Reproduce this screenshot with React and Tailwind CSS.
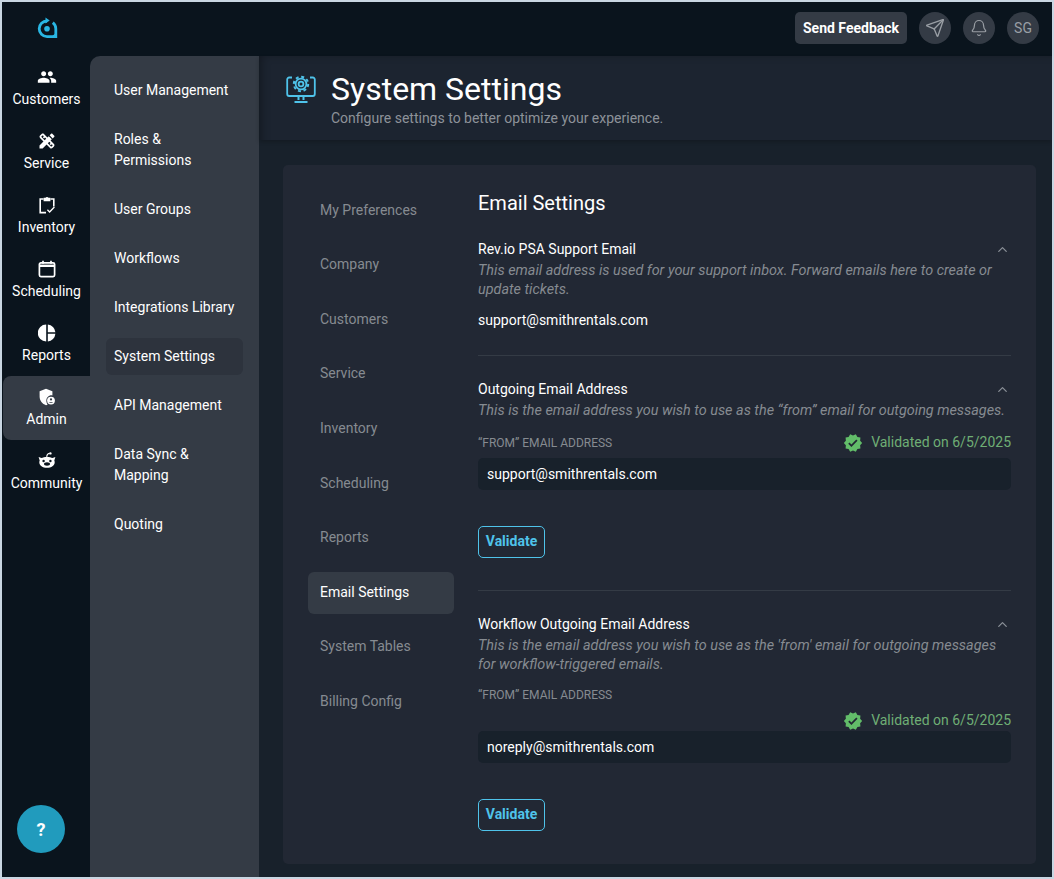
import React from 'react'
import { MdPeople, MdDesignServices, MdVerified } from 'react-icons/md'
import { ChevronUp, Bell, Send } from 'lucide-react'

function LogoIcon() {
    return (
        <svg width="22" height="22" viewBox="0 0 22 22" fill="none">
            <path d="M11 4a7.800 7.800 0 1 0 0 15.600h8.800v-7.800a7.800 7.800 0 0 0-3-6.100" stroke="#29b6e3" strokeWidth="2.800" />
            <path d="M9.500 .6l4.200 3-4.200 2.800z" fill="#29b6e3" />
            <path d="M21 21h-7l7-6z" fill="#29b6e3" />
            <circle cx="11" cy="11.800" r="2.800" fill="#29b6e3" />
        </svg>
    )
}

function ClipboardIcon() {
    return (
        <svg width="18" height="18" viewBox="0 0 18 18" fill="none" stroke="white" strokeWidth="1.600">
            <path d="M8 16.600H2.200V3h3.400M12.400 3h3.400v7.400" />
            <path d="M5.600 1.800h1.900a1.700 1.700 0 0 1 3 0h1.900v3.400H5.600z" fill="white" stroke="none" />
            <path d="M9.400 13.800l2.200 2.200 4.800-5" strokeWidth="1.300" />
        </svg>
    )
}

function CalendarIcon() {
    return (
        <svg width="18" height="18" viewBox="0 0 18 18" fill="none" stroke="white" strokeWidth="1.700">
            <rect x="1.400" y="2.800" width="15.200" height="13.800" rx="1.500" />
            <path d="M1.400 5.800h15.200" strokeWidth="2.400" />
            <path d="M5 .8v3M13 .8v3" />
        </svg>
    )
}

function PieIcon() {
    return (
        <svg width="18" height="18" viewBox="0 0 18 18" fill="white">
            <path d="M8.200 .6v16.800a8.400 8.400 0 0 1 0-16.800z" />
            <path d="M9.800 .6a8.400 8.400 0 0 1 7.600 7.600H9.800z" />
            <path d="M9.800 9.800h7.600a8.400 8.400 0 0 1-7.600 7.600z" />
        </svg>
    )
}

function AdminIcon() {
    return (
        <svg width="18" height="18" viewBox="0 0 18 18">
            <path d="M8 .8l6.400 2.400v4.200c-3.200-.6-6.400 2-6 6 .1 1.200.6 2.200 1.200 3.100-.5.3-1 .5-1.600.7-3.600-1-6.400-4.600-6.400-8.600V3.200z" fill="white" />
            <circle cx="13" cy="12.600" r="3.900" fill="white" />
            <circle cx="13" cy="11.400" r="1.100" fill="#343b45" />
            <path d="M10.800 14.800c.4-1.200 4-1.200 4.400 0z" fill="#343b45" />
        </svg>
    )
}

function CommunityIcon() {
    return (
        <svg width="18" height="18" viewBox="0 0 18 18">
            <path d="M9 5c-2.200 0-4.200.4-5.500 1.100L.6 5l1.100 3.400C1.400 9 1.300 9.600 1.300 10.200c0 3.400 3.400 5.600 7.700 5.600s7.700-2.200 7.700-5.600c0-.6-.1-1.200-.4-1.800L17.400 5l-2.900 1.100C13.200 5.400 11.200 5 9 5z" fill="white" />
            <path d="M8.800 5.200c-.1-1.800.4-3.400 2.700-3.800" stroke="white" strokeWidth="1.100" fill="none" />
            <circle cx="12.400" cy="1.400" r="1.200" fill="white" />
            <circle cx="5.600" cy="9" r="1.200" fill="#0a141d" />
            <circle cx="12.400" cy="9" r="1.200" fill="#0a141d" />
            <ellipse cx="9" cy="12" rx="3" ry="1.700" fill="#0a141d" />
        </svg>
    )
}

function SettingsMonitorIcon() {
    return (
        <svg width="32" height="32" viewBox="0 0 32 32" fill="none" stroke="#4fc3ea" strokeWidth="1.800">
            <path d="M7 6.500H4.200a2 2 0 0 0-2 2V23a2 2 0 0 0 2 2h23.600a2 2 0 0 0 2-2V8.500a2 2 0 0 0-2-2H25" />
            <path d="M13.500 25v4M18.500 25v4" strokeWidth="2" />
            <path d="M9.500 31h13" strokeWidth="2" />
            <circle cx="16" cy="13" r="2.400" strokeWidth="1.800" />
            <circle cx="16" cy="13" r="5.400" strokeWidth="1.800" />
            <circle cx="16" cy="13" r="7.200" strokeWidth="2" strokeDasharray="3 2.650" />
        </svg>
    )
}

const mainNav = [
    { label: 'Customers', icon: <MdPeople size={20} color="white" /> },
    { label: 'Service', icon: <MdDesignServices size={20} color="white" /> },
    { label: 'Inventory', icon: <ClipboardIcon /> },
    { label: 'Scheduling', icon: <CalendarIcon /> },
    { label: 'Reports', icon: <PieIcon /> },
    { label: 'Admin', icon: <AdminIcon />, active: true },
    { label: 'Community', icon: <CommunityIcon /> },
]

const adminNav = [
    'User Management',
    'Roles & Permissions',
    'User Groups',
    'Workflows',
    'Integrations Library',
    'System Settings',
    'API Management',
    'Data Sync & Mapping',
    'Quoting',
]

const settingsNav = [
    'My Preferences',
    'Company',
    'Customers',
    'Service',
    'Inventory',
    'Scheduling',
    'Reports',
    'Email Settings',
    'System Tables',
    'Billing Config',
]

function SectionTitle({ children }) {
    return (
        <div className="flex h-[21px] items-center justify-between">
            <span className="text-sm leading-[21px] text-white">{children}</span>
            <ChevronUp size={15} color="#8a9097" className="mr-[1px]" />
        </div>
    )
}

function Validated() {
    return (
        <div className="flex items-center gap-[8px] text-sm leading-[21px] text-[#6fae75]">
            <MdVerified size={20} color="#62bd69" />
            <span>Validated on 6/5/2025</span>
        </div>
    )
}

function ValidateButton() {
    return (
        <button className="flex h-[32px] w-[67px] items-center justify-center rounded-[5px] border border-[#4fc3ea] pb-[2px] text-sm font-bold text-[#4fc3ea]">
            Validate
        </button>
    )
}

function App() {
    return (
        <div className="h-[879px] w-[1054px] overflow-hidden border-2 border-[#c9d6e2] bg-[#0a141d] font-['Roboto',sans-serif]">
            {/* Top bar */}
            <div className="flex h-[54px] items-center justify-between pb-[2px] pl-[34px] pr-[13px]">
                <LogoIcon />
                <div className="flex items-center gap-[12px]">
                    <button className="flex h-[32px] w-[112px] items-center justify-center rounded-[5px] bg-[#343b45] text-sm font-bold text-white">
                        Send Feedback
                    </button>
                    <div className="flex size-[32px] items-center justify-center rounded-full bg-[#343b45]">
                        <Send size={20} color="#9a9fa5" strokeWidth={1.6} />
                    </div>
                    <div className="flex size-[32px] items-center justify-center rounded-full bg-[#343b45]">
                        <Bell size={18} color="#9a9fa5" strokeWidth={1.6} />
                    </div>
                    <div className="flex size-[32px] items-center justify-center rounded-full bg-[#343b45] text-sm text-[#9a9fa5]">
                        SG
                    </div>
                </div>
            </div>

            <div className="flex h-[821px]">
                {/* Main nav */}
                <div className="relative flex w-[88px] shrink-0 flex-col">
                    {mainNav.map((item) => (
                        <div key={item.label} className={`ml-[1px] flex h-[64px] flex-col items-center rounded-l-[8px] pt-[11px] ${item.active ? 'bg-[#343b45]' : ''}`}>
                            <div className="flex h-[20px] items-center justify-center">{item.icon}</div>
                            <span className="mt-[2px] text-sm leading-[21px] text-white">{item.label}</span>
                        </div>
                    ))}
                    <div className="absolute bottom-[24px] left-[15px] flex size-[48px] items-center justify-center rounded-full bg-[#219bbd] text-[18px] font-bold text-white">
                        ?
                    </div>
                </div>

                {/* Admin nav */}
                <div className="flex w-[169px] shrink-0 flex-col gap-[12px] rounded-tl-[10px] bg-[#343b45] px-[16px] pt-[16px]">
                    {adminNav.map((item) => (
                        <div key={item} className={`rounded-[6px] p-[8px] text-sm leading-[21px] text-white ${item === 'System Settings' ? 'bg-[#2d333d]' : ''}`}>
                            {item}
                        </div>
                    ))}
                </div>

                {/* Content */}
                <div className="flex min-w-0 flex-1 flex-col bg-[#18212b]">
                    <div className="flex h-[84px] items-start bg-[#1c2430] pl-[26px] pt-[15px] shadow-[inset_10px_6px_10px_-8px_rgba(0,0,0,0.35),0_2px_4px_rgba(0,0,0,0.2)]">
                        <SettingsMonitorIcon />
                        <div className="ml-[14px]">
                            <h1 className="text-[32px] leading-[36px] text-white">System Settings</h1>
                            <p className="mt-[1px] text-sm leading-[20px] text-[#8d9299]">Configure settings to better optimize your experience.</p>
                        </div>
                    </div>

                    <div className="ml-[24px] mt-[25px] flex h-[699px] w-[753px] rounded-[5px] bg-[#222834] pl-[25px] pt-[24px]">
                        <div className="mt-[0.8px] flex w-[146px] flex-col gap-[12.55px]">
                            {settingsNav.map((item) => (
                                <div key={item} className={`flex h-[42px] shrink-0 items-center rounded-[6px] px-[12px] pb-[2px] text-sm ${item === 'Email Settings' ? 'bg-[#343b45] text-white' : 'text-[#868b91]'}`}>
                                    {item}
                                </div>
                            ))}
                        </div>

                        <div className="ml-[24px] w-[533px]">
                            <h2 className="text-[20px] leading-[28px] text-white">Email Settings</h2>

                            <div className="mt-[22px] h-[117px] border-b border-[#343b45]">
                                <SectionTitle>Rev.io PSA Support Email</SectionTitle>
                                <p className="mt-[1px] text-[14.4px] italic leading-[19px] text-[#868b91]">
                                    This email address is used for your support inbox. Forward emails here to create or update tickets.
                                </p>
                                <p className="mt-[11px] text-sm leading-[21px] text-white">support@smithrentals.com</p>
                            </div>

                            <div className="mt-[23px] h-[212px] border-b border-[#343b45]">
                                <SectionTitle>Outgoing Email Address</SectionTitle>
                                <p className="text-[14.4px] italic leading-[21px] text-[#868b91]">
                                    This is the email address you wish to use as the “from” email for outgoing messages.
                                </p>
                                <div className="mt-[11px] flex h-[21px] items-center justify-between">
                                    <span className="text-xs text-[#868b91]">“FROM” EMAIL ADDRESS</span>
                                    <Validated />
                                </div>
                                <div className="mt-[5px] flex h-[32px] items-center rounded-[5px] bg-[#18212b] px-[9px] text-sm text-white">
                                    support@smithrentals.com
                                </div>
                                <div className="mt-[36px]">
                                    <ValidateButton />
                                </div>
                            </div>

                            <div className="mt-[23px]">
                                <SectionTitle>Workflow Outgoing Email Address</SectionTitle>
                                <p className="mt-[1px] text-[14.4px] italic leading-[19px] text-[#868b91]">
                                    This is the email address you wish to use as the 'from' email for outgoing messages for workflow-triggered emails.
                                </p>
                                <div className="mt-[12px] text-xs leading-[18px] text-[#868b91]">“FROM” EMAIL ADDRESS</div>
                                <div className="mt-[7px] flex h-[19px] items-center justify-end">
                                    <Validated />
                                </div>
                                <div className="mt-[1px] flex h-[32px] items-center rounded-[5px] bg-[#18212b] px-[9px] pb-[1px] text-sm text-white">
                                    noreply@smithrentals.com
                                </div>
                                <div className="mt-[36px]">
                                    <ValidateButton />
                                </div>
                            </div>
                        </div>
                    </div>
                </div>
            </div>
        </div>
    )
}

export default App
